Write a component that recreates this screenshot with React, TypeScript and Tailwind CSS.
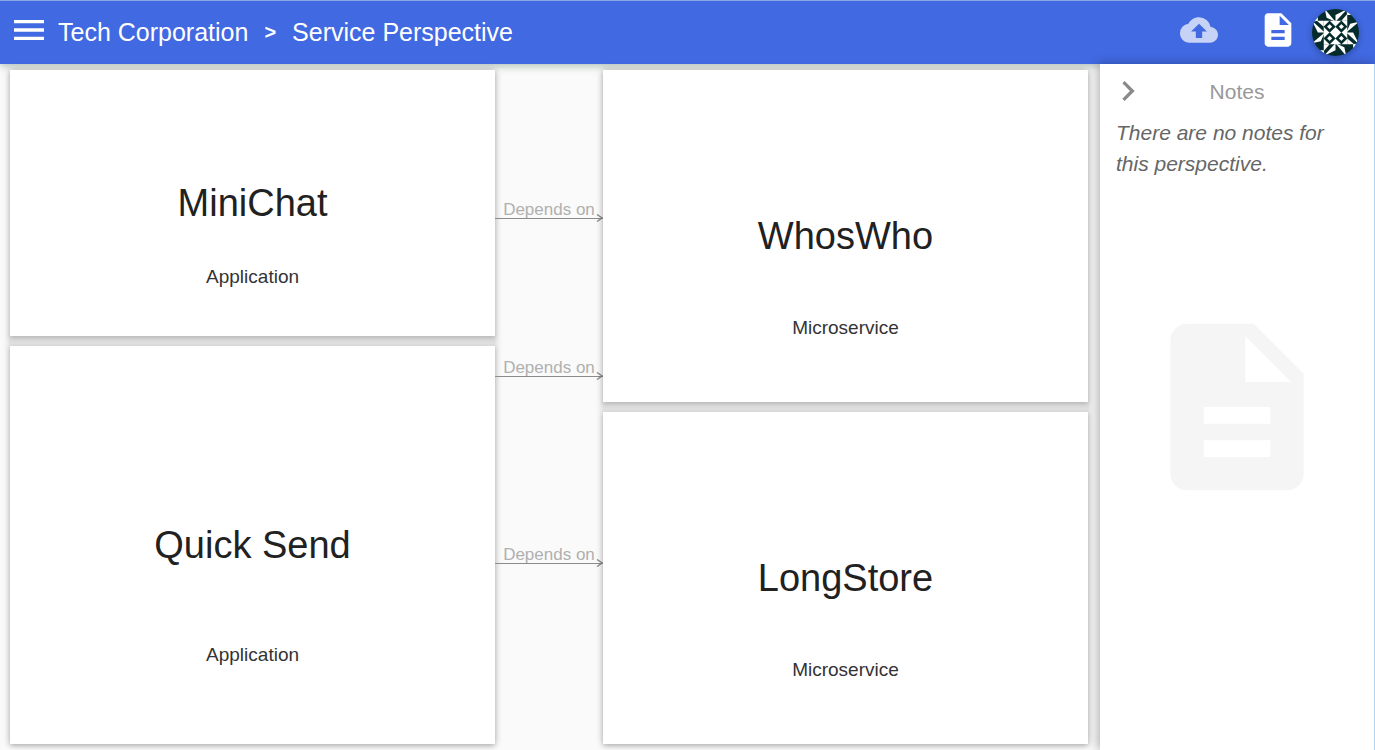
import React from 'react';
import { MdChevronRight, MdCloudUpload, MdDescription, MdMenu } from 'react-icons/md';

interface Item {
  name: string;
  type: string;
  size: string;
}

const consumers: Item[] = [
  { name: 'MiniChat', type: 'Application', size: 'grow-2' },
  { name: 'Quick Send', type: 'Application', size: 'grow-3' },
];

const providers: Item[] = [
  { name: 'WhosWho', type: 'Microservice', size: 'grow' },
  { name: 'LongStore', type: 'Microservice', size: 'grow' },
];

function ItemCard({ name, type, size }: Item) {
  return (
    <section
      className={`grid basis-0 grid-rows-[29fr_22fr_22fr_7fr] justify-items-center bg-white text-center shadow-[0_2px_5px_rgba(0,0,0,0.2)] ${size}`}
    >
      <h2 className="row-start-2 self-center text-[38px] leading-10 text-[#212121]">{name}</h2>
      <p className="row-start-3 self-center pt-0.5 text-[19px] leading-6 text-[#333]">{type}</p>
    </section>
  );
}

function ItemColumn({ items }: { items: Item[] }) {
  return (
    <div className="flex flex-col gap-[10px] bg-[#e0e0e0] shadow-[0_0_8px_rgba(0,0,0,0.2)]">
      {items.map((item) => (
        <ItemCard key={item.name} {...item} />
      ))}
    </div>
  );
}

function Dependency() {
  return (
    <div className="flex flex-col">
      <span className="text-center text-[17px] leading-4 whitespace-nowrap text-[#b0b0b0]">Depends on</span>
      <div className="-mt-1 flex h-2 items-center">
        <div className="h-px grow bg-[#8c8c8c]" />
        <svg className="-ml-2 h-2 w-2" viewBox="0 0 8 8" fill="none" stroke="#8c8c8c" strokeWidth="1.4">
          <path d="M2 0.5 7.2 4 2 7.5" />
        </svg>
      </div>
    </div>
  );
}

function Avatar() {
  return (
    <svg className="h-[47px] w-[47px] rounded-full shadow-[0_2px_6px_rgba(0,0,0,0.3)]" viewBox="0 0 48 48">
      <rect width="48" height="48" fill="#062b2d" />
      <rect x="12" y="12" width="24" height="24" fill="#fff" />
      {[0, 90, 180, 270].map((angle) => (
        <g key={angle} transform={`rotate(${angle} 24 24)`} fill="#fff">
          <path d="M0 13V7l6-3v8z" />
          <path d="M13 0 24 13 15 9z" />
          <path d="M36 0 24 6v7z" />
          <path d="M36 5 30 12h6z" />
          <path d="M18 13.6 22.4 18 18 22.4 13.6 18z" stroke="#062b2d" strokeWidth="2.6" />
        </g>
      ))}
    </svg>
  );
}

function Header() {
  return (
    <header className="flex h-16 items-center border-t border-[#8aa8e6] bg-[#4169e1] pr-4 pl-[9px] text-white shadow-[0_2px_8px_rgba(60,100,80,0.4)]">
      <button type="button" aria-label="Menu" className="mb-1.5">
        <MdMenu size={40} />
      </button>
      <nav aria-label="Breadcrumb" className="mb-0.5 ml-[9px] flex grow items-center gap-4 text-[25px] leading-8">
        <a href="#organization">Tech Corporation</a>
        <span className="text-xl font-bold">&gt;</span>
        <a href="#perspective">Service Perspective</a>
      </nav>
      <button type="button" aria-label="Upload" className="mr-10 mb-1.5 text-white/70">
        <MdCloudUpload size={38} />
      </button>
      <button type="button" aria-label="Notes" className="mr-[14px] mb-1.5">
        <MdDescription size={40} />
      </button>
      <button type="button" aria-label="Account">
        <Avatar />
      </button>
    </header>
  );
}

function NotesPanel() {
  return (
    <aside className="relative flex w-1/5 flex-col border-r border-[#b5d5f5] bg-white px-4 shadow-[-2px_0_10px_rgba(0,0,0,0.3)]">
      <div className="flex h-[53px] items-center">
        <button type="button" aria-label="Collapse notes" className="-ml-2 text-[#8a8a8a]">
          <MdChevronRight size={40} />
        </button>
        <h2 className="grow pt-0.5 pr-8 text-center text-[21px] text-[#999]">Notes</h2>
      </div>
      <p className="text-[21px] leading-[31px] text-[#666] italic">There are no notes for this perspective.</p>
      <div className="flex grow justify-center pt-32 text-[#f5f5f5]">
        <MdDescription size={200} />
      </div>
    </aside>
  );
}

export default function App() {
  return (
    <div className="flex min-h-screen flex-col bg-[#fafafa] font-['Liberation_Sans',Arial,sans-serif]">
      <Header />
      <div className="flex grow">
        <main className="grid grow grid-cols-[9fr_2fr_9fr] pt-[6px] pr-3 pb-[6px] pl-[10px]">
          <ItemColumn items={consumers} />
          <div className="flex flex-col">
            <div className="grow-[132] basis-0" />
            <Dependency />
            <div className="grow-[138] basis-0" />
            <Dependency />
            <div className="grow-[167] basis-0" />
            <Dependency />
            <div className="grow-[177] basis-0" />
          </div>
          <ItemColumn items={providers} />
        </main>
        <NotesPanel />
      </div>
    </div>
  );
}
